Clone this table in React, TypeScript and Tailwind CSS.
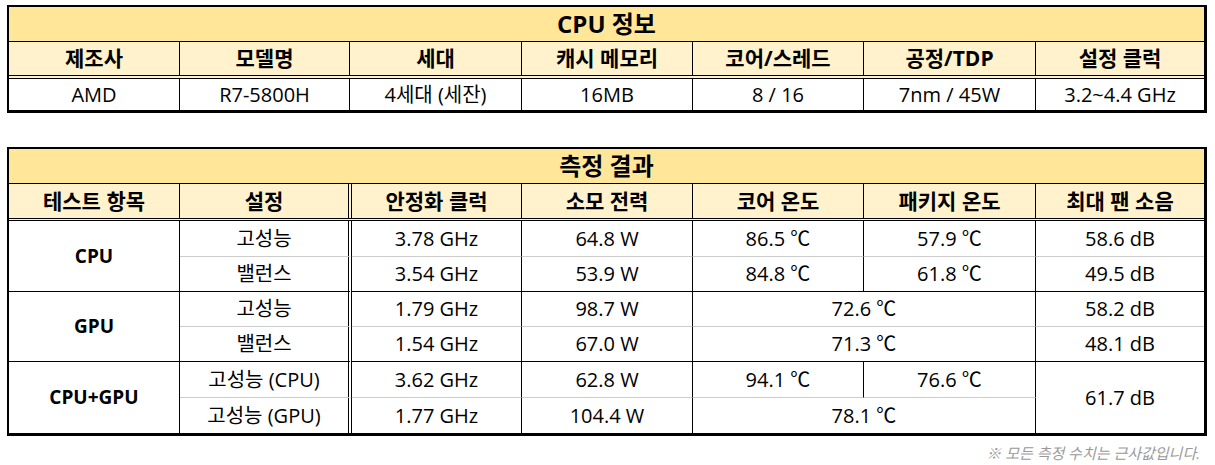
import React from "react";

const COLS = "grid grid-cols-[171px_170px_172px_171px_171px_172px_168px]";
const COLS2 = "grid grid-cols-[171px_172px_170px_171px_171px_172px_168px]";
const C = "flex items-center justify-center leading-none text-black";
const R = "border-r border-r-black";
const R2 = "border-r-4 border-r-black border-double";
const BL = "border-b border-b-[#cccccc]";
const BK = "border-b border-b-black";

function Head({ children, last, dbl }: { children: React.ReactNode; last?: boolean; dbl?: boolean }) {
  return (
    <div className={`${C} text-[21px] font-bold ${last ? "" : dbl ? R2 : R}`}>{children}</div>
  );
}

export default function App() {
  const font = "font-[family-name:'Open_Sans','Noto_Sans_CJK_KR',sans-serif]";
  return (
    <div className={`${font} bg-white w-[1215px] h-[465px] pt-[5px]`}>
      {/* CPU 정보 */}
      <div className="ml-[7px] w-[1200px] border-l-2 border-t-2 border-r-[3px] border-b-[3px] border-black">
        <div className={`${C} h-[35px] bg-[#FFE699] border-b border-black text-[24px] font-bold`}>CPU 정보</div>
        <div className={`${COLS} h-[37px] bg-[#FFF2CC] border-b-4 border-double border-black`}>
          <Head>제조사</Head>
          <Head>모델명</Head>
          <Head>세대</Head>
          <Head>캐시 메모리</Head>
          <Head>코어/스레드</Head>
          <Head>공정/TDP</Head>
          <Head last>설정 클럭</Head>
        </div>
        <div className={`${COLS} h-[31px] text-[20px]`}>
          <div className={`${C} ${R}`}>AMD</div>
          <div className={`${C} ${R}`}>R7-5800H</div>
          <div className={`${C} ${R}`}>4세대 (세잔)</div>
          <div className={`${C} ${R}`}>16MB</div>
          <div className={`${C} ${R}`}>8 / 16</div>
          <div className={`${C} ${R}`}>7nm / 45W</div>
          <div className={`${C}`}>3.2~4.4 GHz</div>
        </div>
      </div>

      {/* 측정 결과 */}
      <div className="ml-[7px] mt-[34px] w-[1200px] border-l-2 border-t-2 border-r-[3px] border-b-[3px] border-black">
        <div className={`${C} h-[35px] bg-[#FFE699] border-b border-black text-[24px] font-bold`}>측정 결과</div>
        <div className={`${COLS2} h-[37px] bg-[#FFF2CC] border-b-[3px] border-double border-black`}>
          <Head>테스트 항목</Head>
          <Head dbl>설정</Head>
          <Head>안정화 클럭</Head>
          <Head>소모 전력</Head>
          <Head>코어 온도</Head>
          <Head>패키지 온도</Head>
          <Head last>최대 팬 소음</Head>
        </div>
        <div className={`${COLS2} grid-rows-[36px_35px_35px_35px_36px_35px] text-[20px]`}>
          {/* CPU */}
          <div className={`${C} row-span-2 ${R} ${BK} font-bold text-[19px]`}>CPU</div>
          <div className={`${C} ${R2} ${BL}`}>고성능</div>
          <div className={`${C} ${R} ${BL}`}>3.78 GHz</div>
          <div className={`${C} ${R} ${BL}`}>64.8 W</div>
          <div className={`${C} ${R} ${BL}`}>86.5 ℃</div>
          <div className={`${C} ${R} ${BL}`}>57.9 ℃</div>
          <div className={`${C} ${BL}`}>58.6 dB</div>

          <div className={`${C} ${R2} ${BK}`}>밸런스</div>
          <div className={`${C} ${R} ${BK}`}>3.54 GHz</div>
          <div className={`${C} ${R} ${BK}`}>53.9 W</div>
          <div className={`${C} ${R} ${BK}`}>84.8 ℃</div>
          <div className={`${C} ${R} ${BK}`}>61.8 ℃</div>
          <div className={`${C} ${BK}`}>49.5 dB</div>

          {/* GPU */}
          <div className={`${C} row-span-2 ${R} ${BK} font-bold text-[19px]`}>GPU</div>
          <div className={`${C} ${R2} ${BL}`}>고성능</div>
          <div className={`${C} ${R} ${BL}`}>1.79 GHz</div>
          <div className={`${C} ${R} ${BL}`}>98.7 W</div>
          <div className={`${C} col-span-2 ${R} ${BL}`}>72.6 ℃</div>
          <div className={`${C} ${BL}`}>58.2 dB</div>

          <div className={`${C} ${R2} ${BK}`}>밸런스</div>
          <div className={`${C} ${R} ${BK}`}>1.54 GHz</div>
          <div className={`${C} ${R} ${BK}`}>67.0 W</div>
          <div className={`${C} col-span-2 ${R} ${BK}`}>71.3 ℃</div>
          <div className={`${C} ${BK}`}>48.1 dB</div>

          {/* CPU+GPU */}
          <div className={`${C} row-span-2 ${R} font-bold text-[19px]`}>CPU+GPU</div>
          <div className={`${C} ${R2} ${BL}`}>고성능 (CPU)</div>
          <div className={`${C} ${R} ${BL}`}>3.62 GHz</div>
          <div className={`${C} ${R} ${BL}`}>62.8 W</div>
          <div className={`${C} ${R} ${BL}`}>94.1 ℃</div>
          <div className={`${C} ${R} ${BL}`}>76.6 ℃</div>
          <div className={`${C} row-span-2`}>61.7 dB</div>

          <div className={`${C} ${R2}`}>고성능 (GPU)</div>
          <div className={`${C} ${R}`}>1.77 GHz</div>
          <div className={`${C} ${R}`}>104.4 W</div>
          <div className={`${C} col-span-2 ${R}`}>78.1 ℃</div>
        </div>
      </div>
      <div className="ml-[7px] w-[1200px] mt-[10px] pr-[7px] text-right text-[15px] italic leading-none text-[#9a9a9a]">
        ※ 모든 측정 수치는 근사값입니다.
      </div>
    </div>
  );
}
